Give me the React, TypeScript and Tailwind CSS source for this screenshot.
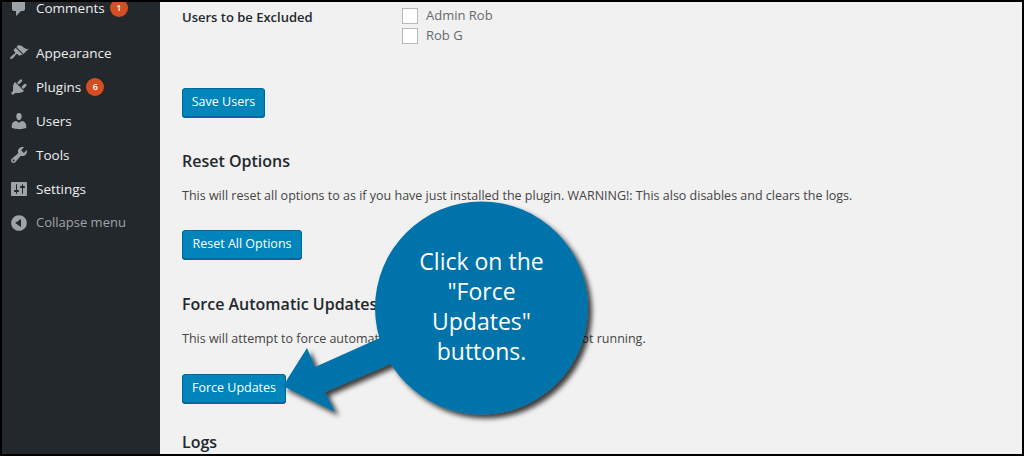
const FONT = "font-['Open_Sans','Noto_Sans',sans-serif]";

const menuItems = [
  { label: 'Appearance', d: 'M14.48 11.06L7.41 3.99l1.5-1.5c.5-.56 2.3-.47 3.51.32 1.21.8 1.43 1.28 2.91 2.1 1.18.64 2.45 1.26 4.45.85zm-.71.71L6.7 4.7 4.93 6.47c-.39.39-.39 1.02 0 1.41l1.06 1.06c.39.39.39 1.03 0 1.42-.6.6-1.43 1.11-2.21 1.69-.35.26-.7.53-1.01.84C1.43 13.71.96 14.62 1.19 15.28c.1.31.34.55.68.67.64.22 1.58-.27 2.76-1.42.31-.31.58-.66.84-1.01.58-.78 1.09-1.61 1.69-2.21.39-.39 1.03-.39 1.42 0l1.06 1.06c.39.39 1.02.39 1.41 0z' },
  { label: 'Plugins', badge: '6', d: 'M13.11 4.36L9.87 7.6 8 5.73l3.24-3.24c.35-.34 1.05-.2 1.56.32.52.51.66 1.21.31 1.55zm-8 1.77l.91-1.12 9.01 9.01-1.19.84c-.71.71-2.63 1.16-3.82 1.16H6.14L4.9 17.26c-.59.59-1.54.59-2.12 0-.59-.58-.59-1.53 0-2.12l1.24-1.24v-3.88c0-1.13.4-3.19 1.09-3.89zm7.26 3.97l3.24-3.24c.34-.35 1.04-.21 1.55.31.52.51.66 1.21.31 1.55l-3.24 3.25z' },
  { label: 'Users', d: 'M10 9.25c-2.27 0-2.73-3.44-2.73-3.44C7 4.02 7.82 2 9.97 2c2.16 0 2.98 2.02 2.71 3.81 0 0-.41 3.44-2.68 3.44zm0 2.57L12.72 10c2.39 0 4.52 2.33 4.52 4.53v2.49s-3.65 1.13-7.24 1.13c-3.65 0-7.24-1.13-7.24-1.13v-2.49c0-2.25 1.94-4.48 4.47-4.48z' },
  { label: 'Tools', d: 'M16.68 9.77c-1.34 1.34-3.3 1.67-4.95.99l-5.41 6.52c-.99.99-2.59.99-3.58 0s-.99-2.59 0-3.57l6.52-5.42c-.68-1.65-.35-3.61.99-4.95 1.28-1.28 3.12-1.62 4.72-1.06l-2.89 2.89 2.82 2.82 2.86-2.87c.53 1.58.18 3.39-1.08 4.65zM3.81 16.21c.4.39 1.04.39 1.43 0 .4-.4.4-1.04 0-1.43-.39-.4-1.03-.4-1.43 0-.39.39-.39 1.03 0 1.43z' },
  { label: 'Settings', d: 'M18 16V4c0-.55-.45-1-1-1H3c-.55 0-1 .45-1 1v12c0 .55.45 1 1 1h14c.55 0 1-.45 1-1zM8 11h1c.55 0 1 .45 1 1s-.45 1-1 1H8v1.5c0 .28-.22.5-.5.5s-.5-.22-.5-.5V13H6c-.55 0-1-.45-1-1s.45-1 1-1h1V5.5c0-.28.22-.5.5-.5s.5.22.5.5V11zm5-2h-1c-.55 0-1-.45-1-1s.45-1 1-1h1V5.5c0-.28.22-.5.5-.5s.5.22.5.5V7h1c.55 0 1 .45 1 1s-.45 1-1 1h-1v5.5c0 .28-.22.5-.5.5s-.5-.22-.5-.5V9z' },
];

function Dashicon({ d }: { d: string }) {
  return (
    <svg viewBox="0 0 20 20" className="w-5 h-5 fill-[#9ea3a8] shrink-0">
      <path fillRule="evenodd" d={d} />
    </svg>
  );
}

function Badge({ n }: { n: string }) {
  return (
    <span className="ml-[5px] w-[18px] h-[18px] rounded-full bg-[#d54e21] text-white text-[9px] font-semibold flex items-center justify-center">
      {n}
    </span>
  );
}

function Sidebar() {
  return (
    <aside className="w-[158px] shrink-0 bg-[#23282d] text-[13.5px] text-[#eeeeee]">
      <div className="flex items-center h-[34px] pl-[7px] -mt-[11px] mb-[11px]">
        <Dashicon d="M5 2h9c1.1 0 2 .9 2 2v7c0 1.1-.9 2-2 2h-2l-5 5v-5H5c-1.1 0-2-.9-2-2V4c0-1.1.9-2 2-2z" />
        <span className="ml-[7px]">Comments</span>
        <Badge n="1" />
      </div>
      {menuItems.map((item) => (
        <div key={item.label} className="flex items-center h-[34px] pl-[7px]">
          <Dashicon d={item.d} />
          <span className="ml-[7px]">{item.label}</span>
          {item.badge && <Badge n={item.badge} />}
        </div>
      ))}
      <div className="flex items-center h-[34px] pl-[7px] text-[#a0a5aa] text-[13px]">
        <Dashicon d="M10 2.16c4.33 0 7.84 3.51 7.84 7.84s-3.51 7.84-7.84 7.84S2.16 14.33 2.16 10 5.71 2.16 10 2.16zm2 11.72V6.12L6.18 9.97z" />
        <span className="ml-[7px]">Collapse menu</span>
      </div>
    </aside>
  );
}

function WpButton({ children, w }: { children: string; w: string }) {
  return (
    <button className={`${w} h-[29px] block rounded-[3px] bg-[#0085ba] border border-[#006799] shadow-[0_1px_0_#006799] text-white text-[12.5px] text-center`}>
      {children}
    </button>
  );
}

function Check({ label }: { label: string }) {
  return (
    <label className="flex items-center h-5 text-[#666a6e] text-[13px]">
      <span className="w-4 h-4 bg-white border border-[#b4b9be]" />
      <span className="ml-2">{label}</span>
    </label>
  );
}

function Callout() {
  return (
    <div className="absolute left-0 top-0 w-[1024px] h-[456px] -ml-[2px] -mt-[2px] pointer-events-none">
      <svg width="1024" height="456" viewBox="0 0 1024 456" className="absolute left-0 top-0">
        <defs>
          <filter id="callout-shadow" x="-20%" y="-20%" width="140%" height="140%">
            <feDropShadow dx="4" dy="4" stdDeviation="2.5" floodColor="#000" floodOpacity="0.75" />
          </filter>
        </defs>
        <g fill="#0073aa" filter="url(#callout-shadow)">
          <path d="M283 386 L307 348 L315 367 L382 337 L395 362 L325 392 L335 412 Z" />
          <circle cx="481.5" cy="308" r="106.5" />
        </g>
      </svg>
      <div className="absolute left-[375px] top-[246px] w-[213px] text-center text-white text-[23px] leading-[30px]">
        <p>Click on the</p>
        <p>"Force</p>
        <p>Updates"</p>
        <p>buttons.</p>
      </div>
    </div>
  );
}

export default function App() {
  return (
    <div className={`${FONT} relative w-[1024px] h-[456px] border-2 border-black flex overflow-hidden bg-[#f1f1f1]`}>
      <Sidebar />
      <main className="relative flex-1 pl-[22px] text-[#444444] text-[12.5px]">
        <div className="flex h-[44px] pt-[4px]">
          <h3 className="w-[220px] pt-[2px] text-[13px] font-semibold text-[#23282d]">Users to be Excluded</h3>
          <div>
            <Check label="Admin Rob" />
            <Check label="Rob G" />
          </div>
        </div>
        <div className="mt-[42px]">
          <WpButton w="w-[83px]">Save Users</WpButton>
        </div>
        <h2 className="mt-[32px] text-[16px] leading-[24px] font-semibold text-[#23282d]">Reset Options</h2>
        <p className="mt-[14px] leading-[18px]">This will reset all options to as if you have just installed the plugin. WARNING!: This also disables and clears the logs.</p>
        <div className="mt-[25px]">
          <WpButton w="w-[120px]">Reset All Options</WpButton>
        </div>
        <h2 className="mt-[33px] text-[16px] leading-[24px] font-semibold text-[#23282d]">Force Automatic Updates</h2>
        <p className="mt-[14px] leading-[18px]">This will attempt to force automatic updates to run now, if they are not running.</p>
        <div className="mt-[26px]">
          <WpButton w="w-[104px]">Force Updates</WpButton>
        </div>
        <h2 className="mt-[27px] text-[16px] leading-[24px] font-semibold text-[#23282d]">Logs</h2>
      </main>
      <Callout />
    </div>
  );
}
